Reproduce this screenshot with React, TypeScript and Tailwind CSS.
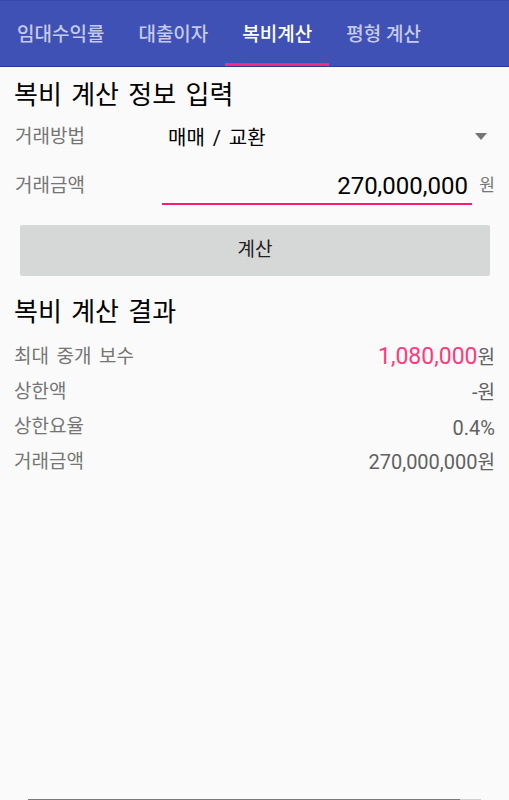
import React, { useState } from 'react';

const tabs = ['임대수익률', '대출이자', '복비계산', '평형 계산'];

type Row = { label: string; value: string; unit?: string; accent?: boolean };

const results: Row[] = [
  { label: '최대 중개 보수', value: '1,080,000', unit: '원', accent: true },
  { label: '상한액', value: '-', unit: '원' },
  { label: '상한요율', value: '0.4%' },
  { label: '거래금액', value: '270,000,000', unit: '원' },
];

export default function App() {
  const [active, setActive] = useState(2);
  const [amount] = useState('270,000,000');

  return (
    <div className="h-[800px] flex flex-col bg-[#fafafa] overflow-hidden font-['Roboto','Noto_Sans_CJK_KR',sans-serif]">
      {/* tab bar */}
      <div className="h-[67px] shrink-0 bg-[#3f51b5] border-t border-[#3949ab] border-b border-b-[#2a3a9c] flex">
        {tabs.map((t, i) => (
          <button
            key={t}
            onClick={() => setActive(i)}
            className={`relative px-[17px] pt-[3px] text-[19px] font-medium ${i === active ? 'text-white' : 'text-[#c5cae9]'}`}
          >
            {t}
            {i === active && <span className="absolute left-0 right-0 bottom-0 h-[3px] bg-[#ff2a7f]" />}
          </button>
        ))}
      </div>

      <div className="px-[14px] [word-spacing:0.18em]">
        <h2 className="mt-[12px] h-[32px] leading-[32px] text-[26px] text-black">복비 계산 정보 입력</h2>

        <div className="mt-[5px] h-[40px] flex items-center pt-[3px]">
          <div className="w-[148px] text-[19px] text-[#757575] pl-[1px]">거래방법</div>
          <div className="flex-1 flex items-center justify-between pl-[6px] pr-[8px]">
            <span className="text-[20px] text-black">매매 / 교환</span>
            <svg width="12" height="7" viewBox="0 0 12 7" className="-mt-[2px]">
              <path d="M0 0 L12 0 L6 7 Z" fill="#757575" />
            </svg>
          </div>
        </div>

        <div className="h-[49px] flex">
          <div className="w-[148px] flex items-center pt-[13px] pb-[2px] pl-[1px] text-[19px] text-[#757575]">거래금액</div>
          <div className="flex-1 flex items-center justify-end pt-[12px] pr-[4px] border-b-2 border-[#ff1a78] text-[24px] text-black">
            {amount}
          </div>
          <div className="w-[23px] flex items-center justify-end pt-[12px] pb-[2px] text-[17px] text-[#757575]">원</div>
        </div>

        <button className="mt-[20px] ml-[6px] mr-[5px] w-[calc(100%-11px)] h-[51px] rounded-[2px] bg-[#d6d7d7] text-[19px] text-[#212121]">
          계산
        </button>

        <h2 className="mt-[20px] h-[32px] leading-[32px] text-[26px] text-black">복비 계산 결과</h2>

        <div className="mt-[11px]">
          {results.map(r => (
            <div key={r.label} className="h-[35px] flex items-center justify-between pt-[2px]">
              <span className="text-[19px] text-[#757575]">{r.label}</span>
              <span className="flex items-baseline">
                <span className={r.accent ? 'text-[23px] text-[#ff3a7c]' : 'text-[20px] text-[#616161]'}>{r.value}</span>
                {r.unit && <span className="text-[19px] text-[#616161]">{r.unit}</span>}
              </span>
            </div>
          ))}
        </div>
      </div>

      <div className="flex-1" />
      <div className="h-[1px] shrink-0 mx-[28px] flex">
        <div className="w-[432px] bg-[#7a7a7a]" />
        <div className="w-[21px] bg-[#d0d0d0]" />
      </div>
    </div>
  );
}
